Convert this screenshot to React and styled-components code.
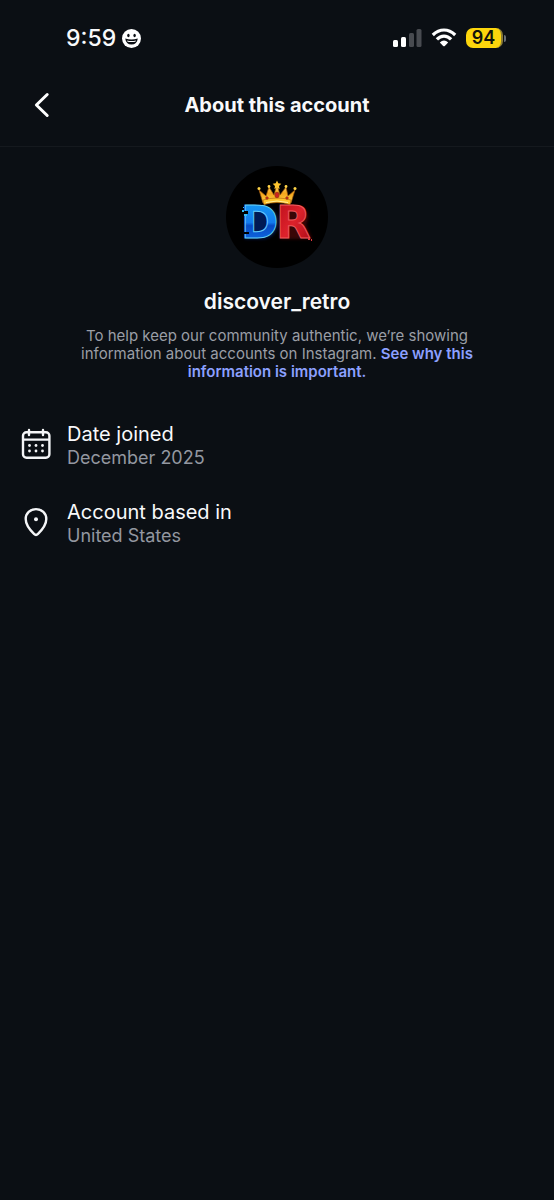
import React from "react";
import styled, { createGlobalStyle } from "styled-components";

const GlobalStyle = createGlobalStyle`
  *, *::before, *::after { box-sizing: border-box; }
  body {
    margin: 0;
    background: #0b0f14;
    color: #f8f9fb;
    font-family: Inter, "Liberation Sans", sans-serif;
  }
`;

const Screen = styled.div`
  min-height: 100vh;
  background: #0b0f14;
`;

const StatusBar = styled.div`
  display: flex;
  align-items: center;
  justify-content: space-between;
  height: 64px;
  padding: 12px 48px 0 66px;
`;

const StatusGroup = styled.div`
  display: flex;
  align-items: center;
  gap: ${({ $gap }) => $gap}px;
`;

const Clock = styled.time`
  font-size: 23px;
  line-height: 28px;
  font-weight: 500;
`;

const Battery = styled.div`
  display: flex;
  align-items: center;
  gap: 1px;
`;

const BatteryLevel = styled.span`
  width: 37px;
  border-radius: 7px;
  border-right: 2px solid #8b7c36;
  background: #fdd60c;
  color: #11130c;
  font-size: 18px;
  line-height: 20px;
  font-weight: 600;
  text-align: center;
`;

const BatteryCap = styled.span`
  width: 2px;
  height: 7px;
  border-radius: 0 2px 2px 0;
  background: #6b6f73;
`;

const Header = styled.header`
  display: grid;
  grid-template-columns: 48px 1fr 48px;
  align-items: center;
  height: 83px;
  padding: 0 18px;
  border-bottom: 1px solid #15191e;
`;

const BackButton = styled.button`
  display: grid;
  place-items: center;
  width: 48px;
  height: 48px;
  padding: 0;
  border: 0;
  background: none;
  color: inherit;
  cursor: pointer;
`;

const Title = styled.h1`
  margin: 0;
  font-size: 20px;
  line-height: 24px;
  font-weight: 700;
  text-align: center;
`;

const Profile = styled.section`
  display: flex;
  flex-direction: column;
  align-items: center;
  padding: 19px 56px 0;
  text-align: center;
`;

const Username = styled.h2`
  margin: 21px 0 12px;
  font-size: 21px;
  line-height: 26px;
  font-weight: 600;
`;

const Description = styled.p`
  max-width: 420px;
  margin: 0;
  color: #9a9ea6;
  font-size: 15px;
  line-height: 18px;
`;

const InfoLink = styled.a`
  color: #8ca0ff;
  font-weight: 600;
  text-decoration: none;
`;

const Details = styled.dl`
  display: flex;
  flex-direction: column;
  gap: 30px;
  margin: 0;
  padding: 41px 20px;
`;

const DetailRow = styled.div`
  display: grid;
  grid-template-columns: 32px 1fr;
  grid-template-areas: "icon label" "icon value";
  column-gap: 15px;
  align-items: center;

  svg {
    grid-area: icon;
    margin-bottom: 4px;
  }
`;

const DetailLabel = styled.dt`
  grid-area: label;
  font-size: 20px;
  line-height: 24px;
`;

const DetailValue = styled.dd`
  grid-area: value;
  margin: 0;
  color: #9397a0;
  font-size: 18px;
  line-height: 24px;
`;

const SmileIcon = () => (
  <svg width="19" height="19" viewBox="0 0 19 19" aria-hidden="true">
    <circle cx="9.5" cy="9.5" r="9.5" fill="#fff" />
    <ellipse cx="6.4" cy="6.5" rx="1.2" ry="1.7" fill="#0b0f14" />
    <ellipse cx="12.6" cy="6.5" rx="1.2" ry="1.7" fill="#0b0f14" />
    <path d="M3.2 9.6Q9.5 11.3 15.8 9.6Q15 15.6 9.5 15.6T3.2 9.6Z" fill="#0b0f14" />
    <path d="M5 11.4Q9.5 12.5 14 11.4L13.4 12.7Q9.5 13.5 5.6 12.7Z" fill="#fff" />
  </svg>
);

const SignalIcon = () => (
  <svg width="29" height="19" viewBox="0 0 29 19" role="img" aria-label="Signal">
    <rect x="0" y="11" width="5" height="7" rx="1.5" fill="#fff" />
    <rect x="8" y="8" width="5" height="10" rx="1.5" fill="#fff" />
    <rect x="16" y="4" width="5" height="14" rx="1.5" fill="#484b50" />
    <rect x="23.5" y="0" width="5" height="18" rx="1.5" fill="#484b50" />
  </svg>
);

const WifiIcon = () => (
  <svg width="26" height="20" viewBox="0 0 26 20" role="img" aria-label="Wi-Fi">
    <g fill="none" stroke="#fff" strokeWidth="3.2">
      <path d="M1.8 7Q7 2 13 2T24.2 7" />
      <path d="M5.9 11.4Q9 8.1 13 8.1T20.1 11.4" />
    </g>
    <path d="M8.8 14.4Q13 10.5 17.2 14.4L13.8 17.9Q13 18.7 12.2 17.9Z" fill="#fff" />
  </svg>
);

const BackIcon = () => (
  <svg width="18" height="26" viewBox="0 0 18 26" aria-hidden="true">
    <path d="M14.2 2.5L3.4 13L14.2 23.5" fill="none" stroke="#fff" strokeWidth="3" strokeLinecap="round" strokeLinejoin="round" />
  </svg>
);

const CalendarIcon = () => (
  <svg width="32" height="32" viewBox="0 0 32 32" fill="none" aria-hidden="true">
    <g stroke="#f4f5f7" strokeWidth="2.4" strokeLinecap="round">
      <rect x="3" y="4.3" width="26.4" height="25.5" rx="3.5" />
      <path d="M3.5 11.6H28.8M9 2V7M23 2V7" />
    </g>
    <g fill="#f4f5f7">
      {[17.5, 23].map((y) => [9.5, 16, 22.5].map((x) => (
        <circle key={`${x}-${y}`} cx={x} cy={y} r="1.4" />
      )))}
    </g>
  </svg>
);

const PinIcon = () => (
  <svg width="32" height="32" viewBox="0 0 32 32" fill="none" aria-hidden="true">
    <path d="M16 3.1C10.2 3.1 5.7 7.4 5.7 13C5.7 18.2 9.3 23.3 14 27.9Q16 29.9 18 27.9C22.7 23.3 26.3 18.2 26.3 13C26.3 7.4 21.8 3.1 16 3.1Z" stroke="#f4f5f7" strokeWidth="2.4" />
    <circle cx="16" cy="13.2" r="2" fill="#f4f5f7" />
  </svg>
);

const Avatar = () => (
  <svg width="102" height="102" viewBox="0 0 102 102" role="img" aria-label="discover_retro profile picture">
    <defs>
      <linearGradient id="blue" x1="0" y1="0" x2="0" y2="1">
        <stop offset="0" stopColor="#18a4f4" />
        <stop offset=".5" stopColor="#127bee" />
        <stop offset=".56" stopColor="#064bc4" />
        <stop offset="1" stopColor="#1678f0" />
      </linearGradient>
      <linearGradient id="red" x1="0" y1="0" x2="1" y2="1">
        <stop offset="0" stopColor="#b50c19" />
        <stop offset=".5" stopColor="#dd222b" />
        <stop offset="1" stopColor="#a60814" />
      </linearGradient>
      <linearGradient id="gold" x1="0" y1="0" x2="0" y2="1">
        <stop offset="0" stopColor="#ffe574" />
        <stop offset=".5" stopColor="#f4a61c" />
        <stop offset="1" stopColor="#ffd345" />
      </linearGradient>
      <filter id="glow" x="-20%" y="-20%" width="140%" height="140%">
        <feGaussianBlur stdDeviation="1.4" />
      </filter>
    </defs>
    <circle cx="51" cy="51" r="51" fill="#000" />
    <g filter="url(#glow)" opacity=".5">
      <path d="M19 40H38Q52 43 52 56Q51 71 37 73H19Z" fill="#0636a8" />
      <path d="M54 40H75Q86 46 80 59L86 73H54Z" fill="#730711" />
    </g>
    <g fontFamily='"DejaVu Sans", sans-serif' fontWeight="700" fontSize="45">
      <text x="15" y="72" fill="url(#blue)" stroke="#64ccf8" strokeWidth="1">D</text>
      <text x="50" y="72" fill="url(#red)" stroke="#f05a5e" strokeWidth="1">R</text>
    </g>
    <path d="M17 45H22V48H17ZM18 66H23V68H18Z" fill="#000" />
    <path d="M16 44H18V46H16ZM18 48H21V50H18ZM17 41H18V42H17Z" fill="#35bdf5" />
    <path d="M82 72H84V74H82ZM85 73H86V75H85Z" fill="#df3b42" />
    <path d="M37 37L33 24L40 30L43 21L48 29L51 18L54 29L60 21L62 30L69 24L65 37Q51 32 37 37Z" fill="url(#gold)" stroke="#9c560e" strokeWidth=".7" />
    <path d="M37 34Q51 30 65 34L64 38.5Q51 34.5 38 38.5Z" fill="#ffc42c" stroke="#b76a12" strokeWidth=".7" />
    <path d="M51 14.5L52.3 17.3L55.3 17.7L53 20L53.6 23L51 21.5L48.4 23L49 20L46.7 17.7L49.7 17.3Z" fill="#ffc52e" />
    <g fill="#ffd447">
      <circle cx="33" cy="22.5" r="1.5" /><circle cx="43" cy="20.5" r="1.4" />
      <circle cx="60" cy="20.5" r="1.4" /><circle cx="69" cy="22.5" r="1.5" />
    </g>
    <g fill="#cc2222" stroke="#8f420b" strokeWidth=".6">
      <ellipse cx="51" cy="29" rx="2.2" ry="2.9" />
      <circle cx="41" cy="32" r="1.3" /><circle cx="61" cy="32" r="1.3" />
    </g>
    <path d="M40 36.5Q51 33.5 62 36.5" fill="none" stroke="#fff09a" strokeWidth="1" />
  </svg>
);

const details = [
  { label: "Date joined", value: "December 2025", Icon: CalendarIcon },
  { label: "Account based in", value: "United States", Icon: PinIcon },
];

export default function App() {
  return (
    <>
      <GlobalStyle />
      <Screen>
        <StatusBar>
          <StatusGroup $gap={6}>
            <Clock>9:59</Clock>
            <SmileIcon />
          </StatusGroup>
          <StatusGroup $gap={9}>
            <SignalIcon />
            <WifiIcon />
            <Battery aria-label="Battery 94%">
              <BatteryLevel>94</BatteryLevel>
              <BatteryCap />
            </Battery>
          </StatusGroup>
        </StatusBar>
        <Header>
          <BackButton type="button" aria-label="Back"><BackIcon /></BackButton>
          <Title>About this account</Title>
        </Header>
        <main>
          <Profile>
            <Avatar />
            <Username>discover_retro</Username>
            <Description>
              To help keep our community authentic, we’re showing information about accounts on Instagram.{" "}
              <InfoLink href="#why">See why this information is important.</InfoLink>
            </Description>
          </Profile>
          <Details>
            {details.map(({ label, value, Icon }) => (
              <DetailRow key={label}>
                <Icon />
                <DetailLabel>{label}</DetailLabel>
                <DetailValue>{value}</DetailValue>
              </DetailRow>
            ))}
          </Details>
        </main>
      </Screen>
    </>
  );
}
